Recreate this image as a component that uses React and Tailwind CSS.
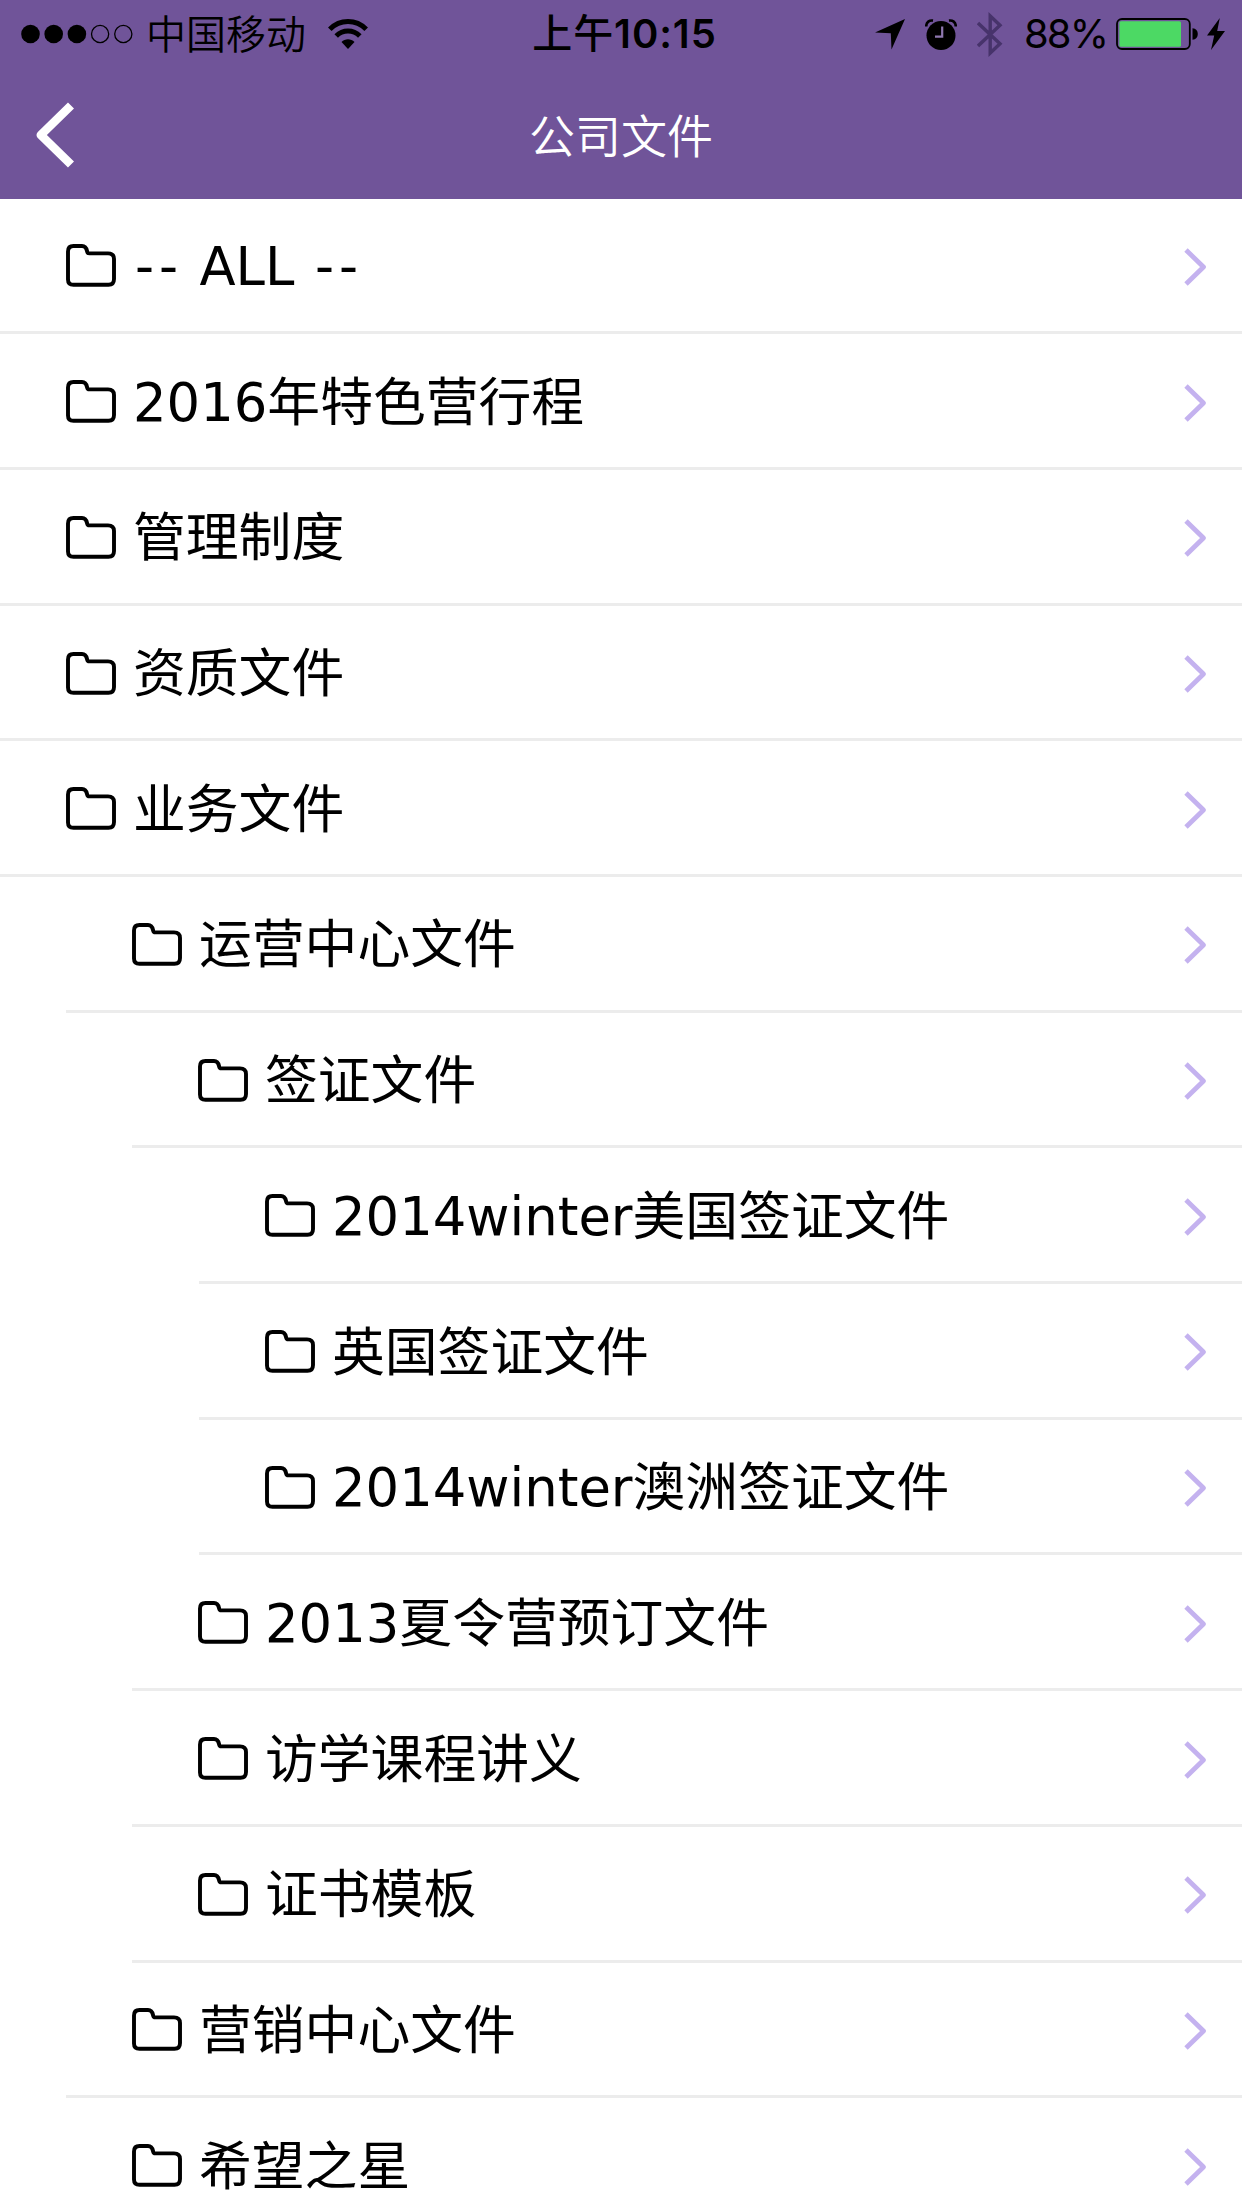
import React from 'react'

const folders = [
  { id: 1, name: '-- ALL --', level: 0 },
  { id: 2, name: '2016年特色营行程', level: 0 },
  { id: 3, name: '管理制度', level: 0 },
  { id: 4, name: '资质文件', level: 0 },
  { id: 5, name: '业务文件', level: 0 },
  { id: 6, name: '运营中心文件', level: 1 },
  { id: 7, name: '签证文件', level: 2 },
  { id: 8, name: '2014winter美国签证文件', level: 3 },
  { id: 9, name: '英国签证文件', level: 3 },
  { id: 10, name: '2014winter澳洲签证文件', level: 3 },
  { id: 11, name: '2013夏令营预订文件', level: 2 },
  { id: 12, name: '访学课程讲义', level: 2 },
  { id: 13, name: '证书模板', level: 2 },
  { id: 14, name: '营销中心文件', level: 1 },
  { id: 15, name: '希望之星', level: 1 }
]

const indents = ['ml-0', 'ml-[66px]', 'ml-[132px]', 'ml-[199px]']

const FolderIcon = () => (
  <svg className="-mt-[1px] w-[50px] h-[43px] shrink-0" viewBox="0 0 50 43" fill="none" stroke="#000" strokeWidth="3.9">
    <path d="M7.5 2H16C19.5 2 20.4 4 21 7C21.4 9 22 9.4 23.5 9.4H42C46 9.4 48 11.5 48 15V35C48 39 46 40.8 42.5 40.8H7.5C4 40.8 2 39 2 35.5V7.5C2 4 4 2 7.5 2Z" />
  </svg>
)

const ChevronIcon = () => (
  <svg className="mt-[1px] w-[24px] h-[38px] shrink-0" viewBox="0 0 24 38" fill="none" stroke="#c4b2ef" strokeWidth="4.8" strokeLinejoin="round">
    <path d="M2 2L19.5 19L2 36" />
  </svg>
)

const SignalDots = () => (
  <svg className="w-[112px] h-[20px]" viewBox="0 0 112 20">
    <circle cx="9.5" cy="10" r="9.3" />
    <circle cx="32.7" cy="10" r="9.3" />
    <circle cx="55.9" cy="10" r="9.3" />
    <circle cx="79.1" cy="10" r="8.6" fill="none" stroke="#000" strokeWidth="1.3" />
    <circle cx="102.3" cy="10" r="8.6" fill="none" stroke="#000" strokeWidth="1.3" />
  </svg>
)

const WifiIcon = () => (
  <svg className="w-[40px] h-[30px]" viewBox="0 0 40 30" fill="none" stroke="#000" strokeWidth="5">
    <path d="M1.8 10.3C12 0 28 0 38.2 10.3" />
    <path d="M8.2 17C14.8 10.4 25.2 10.4 31.8 17" />
    <path d="M20 30L13.5 23C17 19.4 23 19.4 26.5 23Z" fill="#000" stroke="none" />
  </svg>
)

const LocationIcon = () => (
  <svg className="w-[30px] h-[31px]" viewBox="0 0 30 31">
    <path d="M30 0L16.5 30.5L15.8 14.2L0 13.4Z" />
  </svg>
)

const AlarmIcon = () => (
  <svg className="w-[32px] h-[31px]" viewBox="0 0 32 31" fill="none">
    <circle cx="16" cy="16.5" r="14.5" fill="#000" />
    <path d="M1.2 7.5C1.2 3 4.5 1 8 1.6M30.8 7.5C30.8 3 27.5 1 24 1.6" stroke="#000" strokeWidth="2.6" />
    <path d="M17.2 7.5V17.6H10" stroke="#8f78b0" strokeWidth="2.2" />
  </svg>
)

const BluetoothIcon = () => (
  <svg className="w-[26px] h-[45px]" viewBox="0 0 26 45" fill="none" stroke="#47336b" strokeWidth="3.4">
    <path d="M1 11L23 31.8L13.2 41V4L23 13.2L1 34" />
  </svg>
)

const BatteryIcon = () => (
  <svg className="w-[82px] h-[32px]" viewBox="0 0 82 32">
    <rect x="1" y="1" width="72.8" height="30" rx="5" fill="none" stroke="#000" strokeWidth="1.8" />
    <rect x="3.4" y="3.2" width="61.6" height="25.6" rx="1.6" fill="#4cd964" />
    <path d="M76.5 10.2C80 10.6 81.8 12.8 81.8 16C81.8 19.2 80 21.4 76.5 21.8Z" />
  </svg>
)

const BoltIcon = () => (
  <svg className="w-[18px] h-[32px]" viewBox="0 0 18 32">
    <path d="M12.8 0L0 17.4H7.2L4 32L18 13H10.2Z" />
  </svg>
)

const StatusBar = () => (
  <div className="flex items-center h-[68px] pl-[21px] pr-[17px] text-[40px] leading-none font-['Inter','Noto_Sans_CJK_SC',sans-serif]">
    <div className="flex flex-1 items-center">
      <SignalDots />
      <span className="ml-[13px] -mt-[4px] font-[350] font-['Noto_Sans_CJK_SC',sans-serif]">中国移动</span>
      <span className="ml-[22px]"><WifiIcon /></span>
    </div>
    <span className="pl-[3px] font-semibold tracking-[0.9px] whitespace-nowrap">
      <span className="font-medium">上午</span>10:15
    </span>
    <div className="flex flex-1 items-center justify-end">
      <LocationIcon />
      <span className="ml-[20px]"><AlarmIcon /></span>
      <span className="ml-[20px]"><BluetoothIcon /></span>
      <span className="ml-[21px] w-[82px] tracking-[-1.9px]">88%</span>
      <span className="ml-[10px]"><BatteryIcon /></span>
      <span className="ml-[9px]"><BoltIcon /></span>
    </div>
  </div>
)

const Header = () => (
  <div className="h-[198.6px] bg-[#705499]">
    <StatusBar />
    <div className="flex items-center h-[130px] px-[36px]">
      <svg className="mt-[4px] w-[38px] h-[66px]" viewBox="0 0 38 66" fill="none" stroke="#fff" strokeWidth="8.6" strokeLinejoin="round">
        <path d="M35 3.5L4.8 33L35 62.5" />
      </svg>
      <h1 className="flex-1 pr-[38px] text-center text-white text-[46px] leading-none font-[350] font-['Noto_Sans_CJK_SC',sans-serif]">
        公司文件
      </h1>
    </div>
  </div>
)

const FolderRow = ({ folder }) => (
  <li className={`flex items-center h-[135.69px] pt-[3px] pl-[66px] pr-[34px] border-b-3 border-[#ececec] ${indents[folder.level]}`}>
    <FolderIcon />
    <span className="flex-1 ml-[17px] pt-[2px] text-[52.8px] leading-none whitespace-nowrap text-black font-['DejaVu_Sans','Noto_Sans_CJK_SC',sans-serif]">
      {folder.name.split(/(--)/).map((part, i) =>
        part === '--' ? (
          <span key={i} className="ml-[2px] -mr-[2px] tracking-[4.9px]">{part}</span>
        ) : (
          <span key={i} className="[word-spacing:1.8px]">{part}</span>
        )
      )}
    </span>
    <ChevronIcon />
  </li>
)

const App = () => {
  return (
    <div className="w-[1242px] h-[2208px] overflow-hidden bg-white">
      <Header />
      <ul>
        {folders.map((folder) => (
          <FolderRow key={folder.id} folder={folder} />
        ))}
      </ul>
    </div>
  )
}

export default App
